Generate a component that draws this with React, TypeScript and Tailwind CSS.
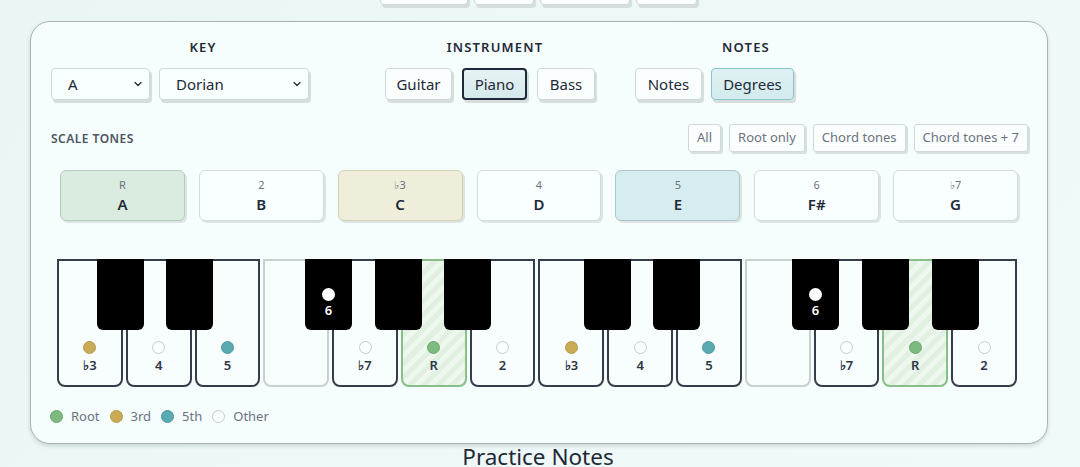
import React from 'react'
import { ChevronDown } from 'lucide-react'

type Kind = 'root' | 'third' | 'fifth' | 'other'

interface KeyInfo {
  deg?: string
  kind?: Kind
}

const dotClass: Record<Kind, string> = {
  root: 'bg-[#7dba7f] border-[#6aa76c]',
  third: 'bg-[#c9aa55] border-[#b79a47]',
  fifth: 'bg-[#5aaab1] border-[#4b99a1]',
  other: 'bg-[#fbfefe] border-[#c3cbcc]',
}

const octave: KeyInfo[] = [
  { deg: '♭3', kind: 'third' },
  { deg: '4', kind: 'other' },
  { deg: '5', kind: 'fifth' },
  {},
  { deg: '♭7', kind: 'other' },
  { deg: 'R', kind: 'root' },
  { deg: '2', kind: 'other' },
]
const whiteKeys = [...octave, ...octave]

const blackKeys: { left: number; deg?: string }[] = [
  { left: 40 },
  { left: 109 },
  { left: 248, deg: '6' },
  { left: 318 },
  { left: 387 },
  { left: 527 },
  { left: 596 },
  { left: 735, deg: '6' },
  { left: 805 },
  { left: 875 },
]

const tones = [
  { deg: 'R', note: 'A', cls: 'bg-[#d9ecdf] border-[#b6cdbd]' },
  { deg: '2', note: 'B', cls: 'bg-[#f9fefe] border-[#d3dbdb]' },
  { deg: '♭3', note: 'C', cls: 'bg-[#eeeedb] border-[#d3d0b6]' },
  { deg: '4', note: 'D', cls: 'bg-[#f9fefe] border-[#d3dbdb]' },
  { deg: '5', note: 'E', cls: 'bg-[#d7ecee] border-[#abc7ca]' },
  { deg: '6', note: 'F#', cls: 'bg-[#f9fefe] border-[#d3dbdb]' },
  { deg: '♭7', note: 'G', cls: 'bg-[#f9fefe] border-[#d3dbdb]' },
]

const btn =
  'h-[32px] rounded-[4px] border border-[#d0d9d9] bg-[#fbfefe] shadow-[2px_3px_0_#d5dddd] text-[15px] text-[#1f2937] flex items-center justify-center'

const Label = ({ children }: { children: React.ReactNode }) => (
  <div className="h-[17px] text-center text-[13px] leading-[17px] font-semibold tracking-[0.09em] text-[#1f2937]">
    {children}
  </div>
)

const Select = ({ value, width }: { value: string; width: string }) => (
  <div className={`${width} h-[32px] rounded-[4px] border border-[#d0d9d9] bg-[#f9fefe] shadow-[2px_3px_0_#d5dddd] flex items-center justify-between pl-[16px] pr-[5px] text-[15px] text-[#1f2937]`}>
    <span>{value}</span>
    <ChevronDown size={12} strokeWidth={2.5} className="text-[#1f2937]" />
  </div>
)

export default function App() {
  return (
    <div className="w-full h-[467px] overflow-hidden bg-[#ecf7f7] bg-[linear-gradient(120deg,#eaf6f6,#f1fafa)] font-['Noto_Sans',sans-serif]">
      {/* tail of the control bar above */}
      <div className="flex justify-center gap-[6px] -mt-[28px] pr-[4px]">
        <div className={`${btn} w-[88px] h-[33px]`} />
        <div className={`${btn} w-[60px] h-[33px]`} />
        <div className={`${btn} w-[90px] h-[33px]`} />
        <div className={`${btn} w-[61px] h-[33px]`} />
      </div>

      <div className="ml-[30px] mt-[16px] w-[1018px] h-[423px] rounded-[20px] border-[1.5px] border-[#a9b5b5] bg-[#f5fdfd] shadow-[0_2px_4px_rgba(0,0,0,0.14)] px-[20px] pt-[17px]">
        {/* controls */}
        <div className="flex gap-[30px]">
          <div className="w-[304px] flex flex-col gap-[12px]">
            <Label>KEY</Label>
            <div className="flex gap-[9px]">
              <Select value="A" width="w-[99px]" />
              <Select value="Dorian" width="w-[150px]" />
            </div>
          </div>
          <div className="w-[220px] flex flex-col gap-[12px]">
            <Label>INSTRUMENT</Label>
            <div className="flex gap-[10px]">
              <div className={`${btn} w-[67px]`}>Guitar</div>
              <div className="w-[65px] h-[32px] rounded-[4px] border-2 border-[#1f2937] bg-[linear-gradient(180deg,#e6f3f4,#d5e9eb)] shadow-[2px_3px_0_#d5dddd] text-[15px] text-[#1f2937] flex items-center justify-center">
                Piano
              </div>
              <div className={`${btn} w-[58px]`}>Bass</div>
            </div>
          </div>
          <div className="w-[222px] flex flex-col gap-[12px]">
            <Label>NOTES</Label>
            <div className="flex gap-[9px]">
              <div className={`${btn} w-[67px]`}>Notes</div>
              <div className="w-[83px] h-[32px] rounded-[4px] border-[1.5px] border-[#88c6cb] bg-[linear-gradient(180deg,#dff1f2,#d3ebed)] shadow-[2px_3px_0_#d5dddd] text-[15px] text-[#1f2937] flex items-center justify-center">
                Degrees
              </div>
            </div>
          </div>
        </div>

        {/* scale tones header */}
        <div className="mt-[24px] h-[28px] flex items-center justify-between">
          <div className="pt-[1px] text-[12px] font-semibold tracking-[0.04em] text-[#4b5563]">SCALE TONES</div>
          <div className="flex gap-[8px] -mr-[1px]">
            {['All', 'Root only', 'Chord tones', 'Chord tones + 7'].map((t) => (
              <div
                key={t}
                className="h-[28px] px-[8px] rounded-[3px] border border-[#d0d9d9] bg-[#fbfefe] shadow-[2px_2px_0_#d8dfdf] text-[13px] text-[#6b7280] flex items-center"
              >
                {t}
              </div>
            ))}
          </div>
        </div>

        {/* tone cards */}
        <div className="mt-[18px] px-[9px] grid grid-cols-7 gap-[14px]">
          {tones.map((t) => (
            <div
              key={t.note}
              className={`h-[51px] rounded-[6px] border-[1.5px] ${t.cls} shadow-[2px_2px_0_#dde4e4] flex flex-col items-center justify-center gap-[2px] pt-[1px]`}
            >
              <span className="text-[11px] leading-[14px] text-[#6b7280]">{t.deg}</span>
              <span className="text-[15px] leading-[20px] font-semibold text-[#1f2937]">{t.note}</span>
            </div>
          ))}
        </div>

        {/* piano */}
        <div className="relative mt-[38px] ml-[6px] w-[960px] h-[128px] flex gap-[3px]">
          {whiteKeys.map((k, i) => {
            const isRoot = k.kind === 'root'
            const border = !k.kind ? 'border-[#c7cfd1]' : isRoot ? 'border-[#86bf88]' : 'border-[#363d4a]'
            const bg = isRoot
              ? 'bg-[repeating-linear-gradient(135deg,#e2f0e2_0px,#e2f0e2_5px,#eef7ee_5px,#eef7ee_10px)]'
              : 'bg-[#f8fefe]'
            return (
              <div
                key={i}
                className={`flex-1 h-full rounded-b-[8px] border-2 ${border} ${bg} flex flex-col items-center justify-end pb-[11px] gap-[3px]`}
              >
                {k.kind && (
                  <>
                    <span className={`w-[13px] h-[13px] rounded-full border ${dotClass[k.kind]}`} />
                    <span className="text-[13px] leading-[17px] font-semibold text-[#2d3646]">{k.deg}</span>
                  </>
                )}
              </div>
            )
          })}
          {blackKeys.map((b, i) => (
            <div
              key={i}
              className="absolute top-0 w-[47px] h-[71px] bg-black rounded-b-[6px] flex flex-col items-center justify-end pb-[11px] gap-[1px]"
              style={{ left: b.left }}
            >
              {b.deg && (
                <>
                  <span className="w-[13px] h-[13px] rounded-full bg-white" />
                  <span className="text-[13px] leading-[17px] font-semibold text-white">{b.deg}</span>
                </>
              )}
            </div>
          ))}
        </div>

        {/* legend */}
        <div className="mt-[20px] flex items-center gap-[10px] text-[13px] text-[#6b7280] -ml-[1px]">
          {([
            ['root', 'Root'],
            ['third', '3rd'],
            ['fifth', '5th'],
            ['other', 'Other'],
          ] as [Kind, string][]).map(([k, l]) => (
            <div key={k} className="flex items-center gap-[8px]">
              <span className={`w-[13px] h-[13px] rounded-full border ${dotClass[k]}`} />
              <span>{l}</span>
            </div>
          ))}
        </div>
      </div>

      <div className="text-center text-[22.5px] leading-[28px] text-[#1f2937] -mt-[1px] pr-[4px]">Practice Notes</div>
    </div>
  )
}
